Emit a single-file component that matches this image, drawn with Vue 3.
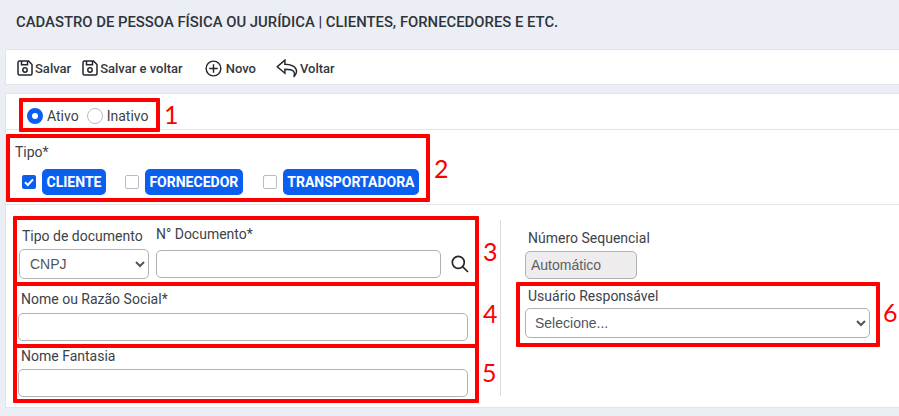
<script setup>
const marks = [
  { n: 1, cls: 'b1' }, { n: 2, cls: 'b2' }, { n: 3, cls: 'b3' },
  { n: 4, cls: 'b4' }, { n: 5, cls: 'b5' }, { n: 6, cls: 'b6' }
]
</script>

<template>
  <div class="page">
    <h1 class="title">CADASTRO DE PESSOA FÍSICA OU JURÍDICA | CLIENTES, FORNECEDORES E ETC.</h1>

    <nav class="toolbar">
      <a class="act a1">
        <svg viewBox="0 0 16 16" class="ic"><path d="M1 2.500A1.500 1.500 0 0 1 2.500 1h9l3.500 3.500v9a1.500 1.500 0 0 1-1.500 1.500h-11A1.500 1.500 0 0 1 1 13.500z M4.500 1.200v3.600h6V1.200" /><circle cx="8" cy="10" r="2.200" /></svg>
        Salvar
      </a>
      <a class="act a2">
        <svg viewBox="0 0 16 16" class="ic"><path d="M1 2.500A1.500 1.500 0 0 1 2.500 1h9l3.500 3.500v9a1.500 1.500 0 0 1-1.500 1.500h-11A1.500 1.500 0 0 1 1 13.500z M4.500 1.200v3.600h6V1.200" /><circle cx="8" cy="10" r="2.200" /></svg>
        Salvar e voltar
      </a>
      <a class="act a3">
        <svg viewBox="0 0 18 18" class="ic lg"><circle cx="9" cy="9" r="7.800" /><path d="M9 4.500v9M4.500 9h9" /></svg>
        Novo
      </a>
      <a class="act a4">
        <svg viewBox="0 0 21 18" class="ic wd"><path d="M8.500 1 1.200 7.300l7.300 6.200V9.800c4.200 0 7 .5 8.200 1.800 1 1.100 1 3.600.3 5.400 2.400-2.500 3.100-5.300 2.100-7.400C17.900 7 14.300 5.100 8.500 5z" /></svg>
        Voltar
      </a>
    </nav>

    <form class="card">
      <div class="status">
        <label class="opt"><input type="radio" name="st" checked class="radio" /> Ativo</label>
        <label class="opt"><input type="radio" name="st" class="radio" /> Inativo</label>
      </div>

      <div class="tipo">
        <div class="tipo-label">Tipo*</div>
        <div class="chips">
          <label class="chk c1"><input type="checkbox" checked class="box" /><span class="chip">CLIENTE</span></label>
          <label class="chk c2"><input type="checkbox" class="box" /><span class="chip">FORNECEDOR</span></label>
          <label class="chk c3"><input type="checkbox" class="box" /><span class="chip">TRANSPORTADORA</span></label>
        </div>
      </div>

      <div class="body">
        <section class="left">
          <div class="doc-row">
            <div class="doc-type">
              <label class="lbl">Tipo de documento</label>
              <select class="ctl sel"><option>CNPJ</option></select>
            </div>
            <div class="doc-num">
              <label class="lbl">N° Documento*</label>
              <input class="ctl inp" type="text" />
            </div>
            <svg class="search" viewBox="0 0 18 18"><circle cx="7.300" cy="7.300" r="6" /><path d="m11.800 11.800 5.200 5.200" /></svg>
          </div>
          <div class="field f-nome">
            <label class="lbl">Nome ou Razão Social*</label>
            <input class="ctl inp" type="text" />
          </div>
          <div class="field f-fant">
            <label class="lbl">Nome Fantasia</label>
            <input class="ctl inp" type="text" />
          </div>
        </section>

        <section class="right">
          <div class="seq">
            <label class="lbl">Número Sequencial</label>
            <input class="ctl inp auto" type="text" value="Automático" disabled />
          </div>
          <div class="resp">
            <label class="lbl">Usuário Responsável</label>
            <select class="ctl sel wide"><option>Selecione...</option></select>
          </div>
        </section>
      </div>
    </form>

    <template v-for="m in marks" :key="m.n">
      <div class="mark" :class="m.cls"></div>
      <span class="num" :class="'n' + m.n">{{ m.n }}</span>
    </template>
  </div>
</template>

<style>
html, body { margin: 0; background: #ebeef4; overflow: hidden; }
</style>

<style scoped>
.page {
  position: relative;
  width: 899px;
  height: 416px;
  background: #ebeef4;
  font-family: Roboto, "Liberation Sans", sans-serif;
  font-size: 14px;
  color: #3d4247;
  overflow: hidden;
}
.title {
  margin: 0;
  height: 49px;
  box-sizing: border-box;
  padding: 14px 0 0 16px;
  font-size: 14.850px;
  line-height: 17px;
  font-weight: 500;
  color: #2f343a;
}
.toolbar {
  display: flex;
  align-items: center;
  height: 36px;
  box-sizing: border-box;
  margin-left: 5px;
  background: #fff;
  border: 1px solid #e2e4e8;
  border-right: 0;
  padding: 2px 0 0 11px;
}
.act {
  display: flex;
  align-items: center;
  gap: 2px;
  font-size: 13px;
  font-weight: 500;
  color: #33383e;
}
.a2 { margin-left: 11px; }
.a3 { margin-left: 22px; gap: 4px; }
.a4 { margin-left: 20px; }
.ic {
  width: 16px;
  height: 16px;
  fill: none;
  stroke: #23272c;
  stroke-width: 1.500;
}
.ic.lg { width: 17px; height: 17px; stroke-width: 1.500; }
.ic.wd { width: 22px; height: 19px; stroke-width: 1.400; }
.card {
  margin: 8px 0 0 5px;
  height: 315px;
  box-sizing: border-box;
  background: #fff;
  border: 1px solid #e2e4e8;
  border-right: 0;
}
.status {
  display: flex;
  align-items: center;
  gap: 8px;
  height: 36px;
  box-sizing: border-box;
  padding: 8px 0 0 21px;
  border-bottom: 1px solid #e2e4e8;
}
.opt {
  display: flex;
  align-items: center;
  gap: 4px;
}
.radio {
  appearance: none;
  width: 16px;
  height: 16px;
  margin: 0;
  border: 1px solid #b9bdc3;
  border-radius: 50%;
  background: #fff;
  box-sizing: border-box;
}
.radio:checked {
  border: 5px solid #0b5fef;
}
.tipo {
  height: 75px;
  box-sizing: border-box;
  border-bottom: 1px solid #e2e4e8;
  padding: 14px 0 0 9px;
}
.tipo-label { line-height: 17px; }
.chips {
  display: flex;
  align-items: center;
  margin-top: 8px;
}
.chk { display: flex; align-items: center; gap: 6px; }
.c1 { margin-left: 7px; }
.c2 { margin-left: 19px; }
.c3 { margin-left: 20px; }
.box {
  appearance: none;
  width: 14px;
  height: 14px;
  margin: 0;
  box-sizing: border-box;
  border: 1px solid #b9bdc3;
  border-radius: 2px;
  background: #fff;
}
.box:checked {
  border: 0;
  background: #0b5fef url("data:image/svg+xml,%3Csvg xmlns='http://www.w3.org/2000/svg' viewBox='0 0 14 14'%3E%3Cpath d='M3 7.300 5.800 10 11 4.300' fill='none' stroke='%23fff' stroke-width='2'/%3E%3C/svg%3E");
}
.chip {
  display: block;
  background: #0b5fef;
  color: #fff;
  font-weight: 700;
  font-size: 14px;
  line-height: 26px;
  padding: 0 4.500px;
  border-radius: 5px;
}
.body {
  display: flex;
  height: 201px;
  box-sizing: border-box;
  padding-top: 15px;
}
.left {
  width: 495px;
  box-sizing: border-box;
  height: 176px;
  border-right: 1px solid #dcdcdc;
}
.lbl { display: block; line-height: 17px; }
.doc-row {
  display: flex;
  align-items: flex-end;
  height: 59px;
  padding-left: 13px;
}
.doc-type { width: 130px; }
.doc-type .lbl { margin: 0 0 4px 3px; }
.doc-num { width: 285px; margin-left: 7px; }
.doc-num .lbl { margin-bottom: 7px; }
.search {
  width: 18px;
  height: 18px;
  margin: 0 0 6px 10px;
  fill: none;
  stroke: #23272c;
  stroke-width: 1.700;
}
.ctl {
  display: block;
  width: 100%;
  box-sizing: border-box;
  font-family: "Liberation Sans", Arial, sans-serif;
  font-size: 14px;
  color: #50565c;
  background: #fff;
  border: 1px solid #aeb0b3;
  border-radius: 5px;
  margin: 0;
  outline: none;
}
.inp { height: 28px; padding: 0 6px; }
.sel {
  height: 30px;
  padding: 0 6px;
}
.doc-num .inp { margin-bottom: 1px; }
.field { margin: 0 0 0 12px; width: 450px; }
.field .lbl { margin: 0 0 4px 3px; }
.f-nome { margin-top: 12px; }
.f-fant { margin-top: 7px; }
.f-nome .lbl { margin-bottom: 5px; }
.f-fant .lbl { margin-bottom: 4px; }
.right {
  flex: 1;
  padding-left: 24px;
}
.seq { width: 112px; padding-top: 10px; }
.seq .lbl { margin: 0 0 4px 3px; white-space: nowrap; }
.auto {
  background: #eeecec;
  color: #5a5f64;
  width: 112px;
  padding: 0 5px;
}
.resp { margin-top: 9px; width: 345px; }
.resp .lbl { margin: 0 0 3px 3px; }
.wide { padding-left: 5px; }

.mark {
  position: absolute;
  box-sizing: border-box;
  border: 4px solid #f00;
  border-radius: 1px;
  pointer-events: none;
}
.b1 { left: 19px; top: 98px; width: 141px; height: 34px; }
.b2 { left: 6px; top: 134px; width: 424px; height: 68px; }
.b3 { left: 13px; top: 216px; width: 466px; height: 70px; }
.b4 { left: 13px; top: 282px; width: 466px; height: 66px; }
.b5 { left: 13px; top: 344px; width: 466px; height: 59px; }
.b6 { left: 516px; top: 282px; width: 364px; height: 65px; }
.num {
  position: absolute;
  font-family: Lato, sans-serif;
  font-size: 25px;
  line-height: 28px;
  color: #f00;
}
.n1 { left: 164px; top: 100px; }
.n2 { left: 434px; top: 154px; }
.n3 { left: 483px; top: 237px; }
.n4 { left: 483px; top: 299px; }
.n5 { left: 482px; top: 358px; }
.n6 { left: 883px; top: 298px; }
</style>
